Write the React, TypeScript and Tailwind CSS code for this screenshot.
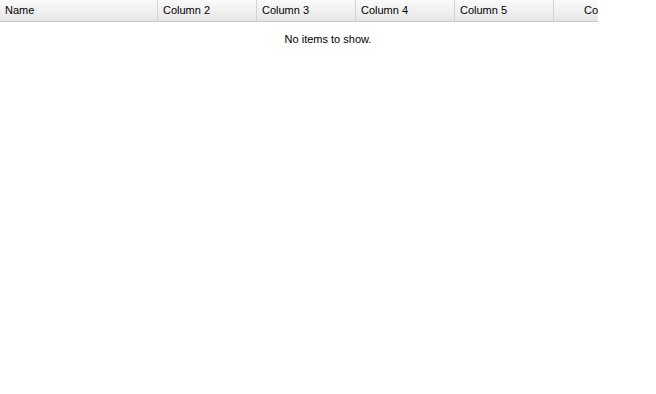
import React from "react";

const cols = [
  { label: "Name", w: "w-[158px]" },
  { label: "Column 2", w: "w-[99px]" },
  { label: "Column 3", w: "w-[99px]" },
  { label: "Column 4", w: "w-[99px]" },
  { label: "Column 5", w: "w-[99px]" },
];

export default function App() {
  return (
    <div className="w-[656px] h-[394px] bg-white font-['Liberation_Sans',Arial,sans-serif] text-[11px] text-black">
      <div className="w-[598px] overflow-hidden">
        <div className="flex h-[22px] w-[700px] border-b border-[#c9c9c9] bg-[linear-gradient(#fbfbfb,#e6e6e6)]">
          {cols.map((c) => (
            <div
              key={c.label}
              className={`${c.w} shrink-0 h-full border-r border-[#d3d3d3] pl-[5px] flex items-center`}
            >
              {c.label}
            </div>
          ))}
          <div className="w-[99px] shrink-0 h-full flex items-center pl-[30px]">Column 6</div>
        </div>
      </div>
      <div className="pt-[11px] text-center leading-[13px]">No items to show.</div>
    </div>
  );
}
